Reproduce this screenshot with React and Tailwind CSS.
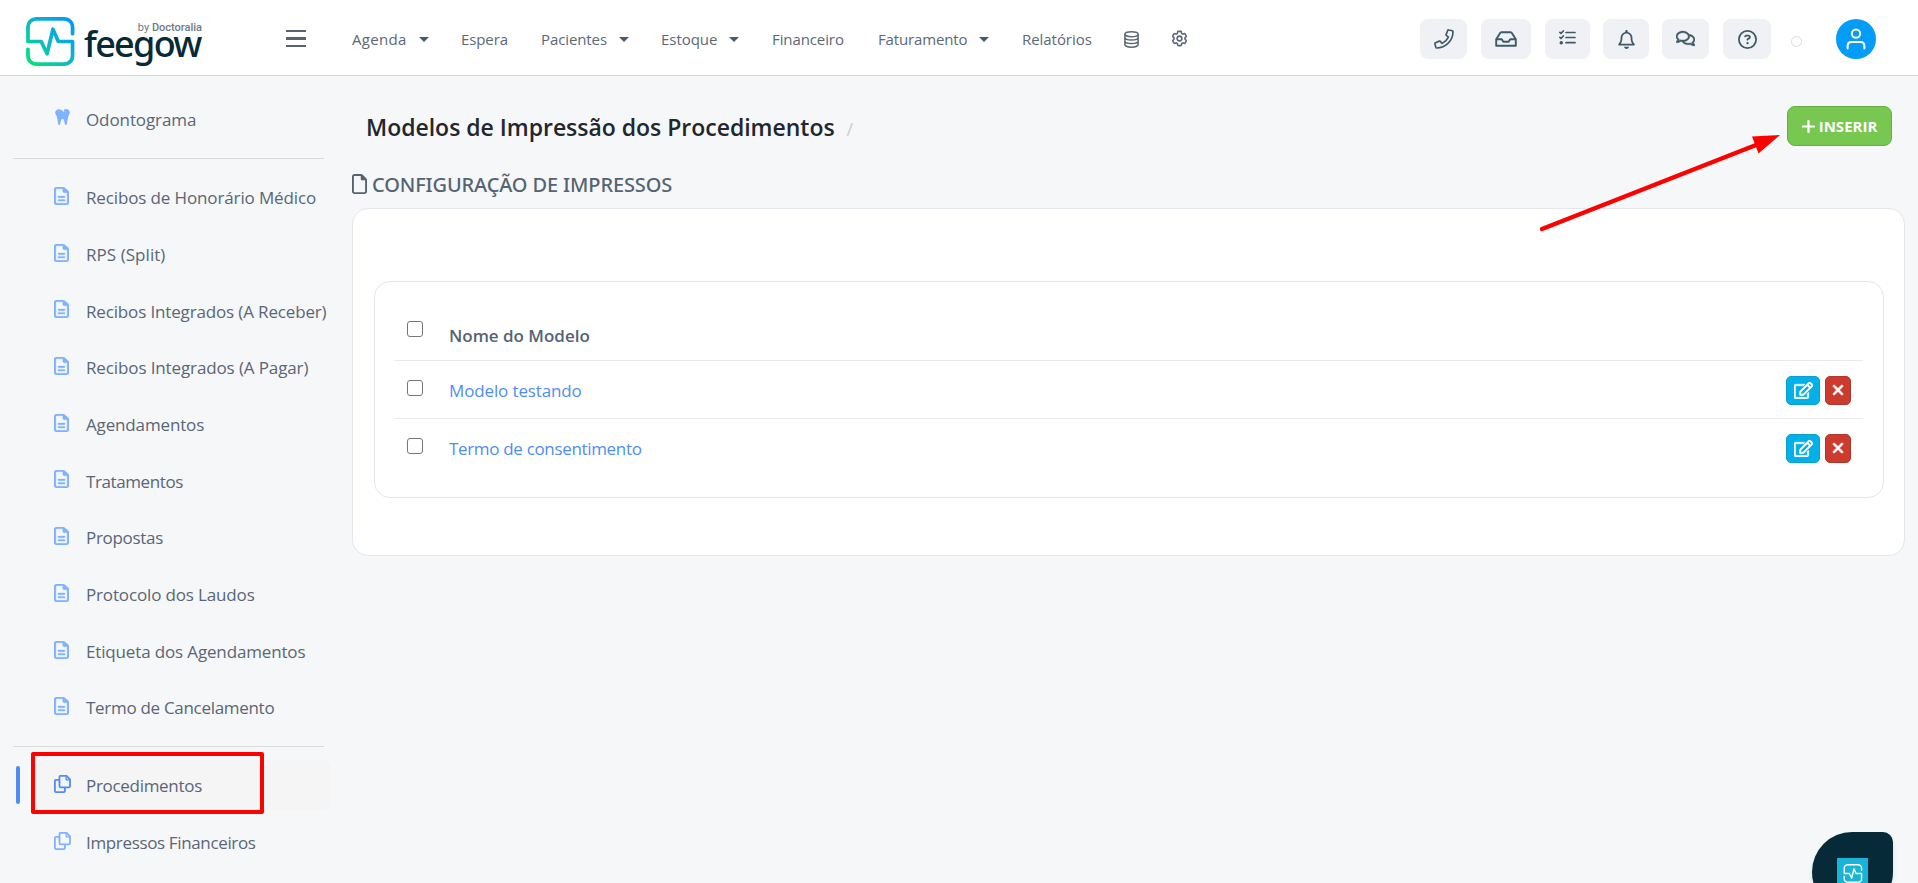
import React from 'react';
import {
    FaRegBell,
    FaRegCircleQuestion,
    FaRegFile,
    FaRegFileLines,
    FaTooth,
    FaXmark,
} from 'react-icons/fa6';
import { FaRegComments, FaRegEdit } from 'react-icons/fa';
import { HiOutlineCog6Tooth } from 'react-icons/hi2';

const menu = [
    { label: "Agenda", width: "w-[109px]", tracking: "tracking-[0.3px]", caret: true },
    { label: "Espera", width: "w-[80px]", tracking: "tracking-[-0.1px]" },
    { label: "Pacientes", width: "w-[120px]", tracking: "tracking-[-0.1px]", caret: true },
    { label: "Estoque", width: "w-[111px]", tracking: "tracking-[-0.05px]", caret: true },
    { label: "Financeiro", width: "w-[106px]", tracking: "tracking-[-0.1px]" },
    { label: "Faturamento", width: "w-[144px]", tracking: "tracking-[-0.15px]", caret: true },
    { label: "Relatórios", width: "w-[102px]", tracking: "tracking-[-0.05px]" },
];

const documents = [
    { label: "Recibos de Honorário Médico", tracking: "tracking-[-0.13px]" },
    { label: "RPS (Split)", tracking: "tracking-[0.05px]" },
    { label: "Recibos Integrados (A Receber)", tracking: "tracking-[-0.15px]" },
    { label: "Recibos Integrados (A Pagar)", tracking: "tracking-[-0.12px]" },
    { label: "Agendamentos", tracking: "tracking-[-0.15px]" },
    { label: "Tratamentos", tracking: "tracking-[-0.4px]" },
    { label: "Propostas", tracking: "tracking-[-0.3px]" },
    { label: "Protocolo dos Laudos", tracking: "tracking-[-0.15px]" },
    { label: "Etiqueta dos Agendamentos", tracking: "tracking-[-0.15px]" },
    { label: "Termo de Cancelamento", tracking: "tracking-[-0.3px]" },
];

const models = [
    { name: "Modelo testando", tracking: "tracking-[-0.13px]" },
    { name: "Termo de consentimento", tracking: "tracking-[-0.33px]" },
];

const PulseMark = ({ className, stroke, strokeWidth }) => (
    <svg viewBox="0 0 50 50" className={className} fill="none" stroke={stroke} strokeWidth={strokeWidth} strokeLinecap="round" strokeLinejoin="round">
        <defs>
            <linearGradient id="pulse" x1="0" y1="50" x2="50" y2="0" gradientUnits="userSpaceOnUse">
                <stop offset="0" stopColor="#00e676" />
                <stop offset="0.1" stopColor="#00e27c" />
                <stop offset="0.45" stopColor="#0fb9c4" />
                <stop offset="1" stopColor="#0095ff" />
            </linearGradient>
        </defs>
        <path d="M47.5 17V11C47.5 5.5 44 2 38.5 2H11C5.5 2 2 5.5 2 11V25H15.5L21.5 37.5L27.5 12.5L33 25H47.5V39C47.5 44.5 44 48 38.5 48H11C5.5 48 2 44.5 2 39V33" />
    </svg>
);

const PhoneIcon = () => (
    <svg viewBox="-20 -20 552 552" className="h-5 w-5" fill="none" stroke="currentColor" strokeWidth="46" strokeLinejoin="round">
        <path d="M485 30l-98-24c-11-3-23 3-28 14l-44 108c-4 10-1 21 7 28l56 48c-36 77-97 138-174 174l-48-56c-7-8-18-11-28-7L20 359c-11 5-17 17-14 28l24 98c3 11 12 19 24 19 248 0 450-202 450-450 0-12-8-21-19-24z" />
    </svg>
);

const InboxIcon = () => (
    <svg viewBox="0 0 22 16" className="h-4 w-[22px]" fill="none" stroke="currentColor" strokeWidth="1.9" strokeLinejoin="round">
        <path d="M1.2 8.3L5 2.2C5.3 1.5 5.8 1.2 6.4 1.2H15.6C16.2 1.2 16.7 1.5 17 2.2L20.8 8.3V14.7H1.2Z" />
        <path d="M1.4 8.3H6.8L8.3 10.8H13.7L15.2 8.3H20.6" />
    </svg>
);

const TasksIcon = () => (
    <svg viewBox="0 0 17 15" className="mb-1 h-[15px] w-[17px]" fill="none" stroke="currentColor" strokeWidth="1.7" strokeLinecap="round" strokeLinejoin="round">
        <path d="M.9 2.4L2 3.5L4.3 1M.9 7.4L2 8.5L4.3 6M7 2.5H16M7 7.5H16M7 12.7H16" />
        <circle cx="2.3" cy="12.7" r=".9" fill="currentColor" />
    </svg>
);

const DatabaseIcon = () => (
    <svg viewBox="0 0 15 17" className="h-[17px] w-[15px]" fill="none" stroke="currentColor" strokeWidth="1.5">
        <ellipse cx="7.5" cy="3.3" rx="6.6" ry="2.5" />
        <path d="M.9 3.3V13.6C.9 15 3.9 16.2 7.5 16.2S14.1 15 14.1 13.6V3.3M.9 6.6C.9 8 3.9 9.1 7.5 9.1S14.1 8 14.1 6.6M.9 10.1C.9 11.5 3.9 12.6 7.5 12.6S14.1 11.5 14.1 10.1" />
    </svg>
);

const CopyIcon = ({ className }) => (
    <svg viewBox="0 0 17 18" className={className} fill="none" stroke="currentColor" strokeWidth="1.8" strokeLinejoin="round">
        <path d="M6.2.9H12.6L16 4.3V11.2C16 11.9 15.6 12.3 14.9 12.3H6.6C5.9 12.3 5.5 11.9 5.5 11.2V1.9C5.5 1.3 5.7.9 6.2.9Z" />
        <path d="M12.2 1V4.8H16" strokeWidth="1.3" />
        <path d="M5.3 4.9H2C1.3 4.9.9 5.3.9 6V16C.9 16.7 1.3 17.1 2 17.1H9.8C10.5 17.1 10.9 16.7 10.9 16V12.6" />
    </svg>
);

const TopButton = ({ className, children }) => (
    <button className={`flex h-10 items-center justify-center rounded-lg bg-[#f0f1f5] text-[#3f5a66] ${className}`}>
        {children}
    </button>
);

const Header = () => (
    <header className="flex h-[76px] shrink-0 border-b border-[#d3d6e0] bg-white text-[#556373]">
        <div className="flex w-[352px] shrink-0 pl-[26px]">
            <PulseMark className="mt-[17px] h-[49px] w-[49px]" stroke="url(#pulse)" strokeWidth={3.8} />
            <div className="ml-[9px] flex w-[127px] flex-col pt-[22px]">
                <span className="mr-[9px] self-end font-[Roboto] text-[11px] leading-[12px] text-[#6b7988]">
                    by <span className="font-medium">Doctoralia</span>
                </span>
                <span className="-mt-1 font-['Noto_Sans'] text-[36px] font-medium leading-[28px] tracking-[-1.7px] text-[#062a38]">
                    feegow
                </span>
            </div>
            <div className="ml-[75px] mt-[30px] flex h-[17px] w-5 flex-col justify-between">
                <i className="h-[2.4px] bg-[#556373]" />
                <i className="h-[2.4px] bg-[#556373]" />
                <i className="h-[2.4px] bg-[#556373]" />
            </div>
        </div>

        <nav className="flex items-center pt-[3px] text-[15px] text-[#5c6878]">
            {menu.map((item) => (
                <a key={item.label} className={`flex items-center whitespace-nowrap ${item.width} ${item.tracking}`}>
                    {item.label}
                    {item.caret && (
                        <svg viewBox="0 0 10 5" className="ml-3 h-[5px] w-[10px] fill-[#4b5a6a]">
                            <path d="M0 0H10L5 5Z" />
                        </svg>
                    )}
                </a>
            ))}
            <div className="w-[46px]"><DatabaseIcon /></div>
            <HiOutlineCog6Tooth className="mb-px h-[19px] w-[19px] stroke-2" />
        </nav>

        <div className="ml-auto flex items-start pr-[42px] pt-[19px]">
            <TopButton className="mr-[14px] w-[47px]"><PhoneIcon /></TopButton>
            <TopButton className="mr-[14px] w-[50px]"><InboxIcon /></TopButton>
            <TopButton className="mr-[13px] w-[45px]"><TasksIcon /></TopButton>
            <TopButton className="mr-[13px] w-[46px]"><FaRegBell className="h-[19px] w-[19px]" /></TopButton>
            <TopButton className="mr-[14px] w-[47px]"><FaRegComments className="mb-0.5 h-[19px] w-[19px] stroke-current stroke-[12]" /></TopButton>
            <TopButton className="mr-[20px] w-12"><FaRegCircleQuestion className="h-[19px] w-[19px]" /></TopButton>
            <span className="mr-[34px] mt-[17px] h-[11px] w-[11px] rounded-full border border-[#dcdcdc]" />
            <div className="flex h-10 w-10 items-center justify-center rounded-full bg-[#039cf7]">
                <svg viewBox="0 0 20 22" className="h-[22px] w-5" fill="none" stroke="#fff" strokeWidth="2" strokeLinecap="round">
                    <circle cx="10" cy="5.6" r="4.2" />
                    <path d="M1.6 20.5V18C1.6 15.5 3.2 14 5.6 14H14.4C16.8 14 18.4 15.5 18.4 18V20.5" />
                </svg>
            </div>
        </div>
    </header>
);

const SideItem = ({ icon, label, tracking }) => (
    <a className="flex h-[56.7px] items-center">
        <span className="mb-[2px] flex w-8 text-[#7fb2ff]">{icon}</span>
        <span className={`mt-[2px] whitespace-nowrap ${tracking}`}>{label}</span>
    </a>
);

const Sidebar = () => (
    <aside className="w-[352px] shrink-0 pl-[13px] pt-[14px] text-[17px] text-[#5a6676]">
        <div className="pl-[41px]">
            <SideItem icon={<FaTooth preserveAspectRatio="none" className="h-[18px] w-[17px]" />} label="Odontograma" tracking="tracking-[-0.1px]" />
        </div>
        <hr className="mb-[10px] mt-[11px] w-[311px] border-[#d8dbe0]" />
        <div className="pl-[41px]">
            {documents.map((doc) => (
                <SideItem
                    key={doc.label}
                    icon={<FaRegFileLines preserveAspectRatio="none" className="h-[18px] w-[15px] stroke-current stroke-[8]" />}
                    label={doc.label}
                    tracking={doc.tracking}
                />
            ))}
        </div>
        <hr className="mb-[10px] mt-[10px] w-[311px] border-[#d8dbe0]" />
        <div className="relative flex h-[56.7px] items-center">
            <span className="ml-[3px] h-[38px] w-1 rounded-sm bg-[#4f8ef0]" />
            <div className="ml-[11px] flex h-[50px] w-[300px] items-center rounded-lg bg-[#f5f5f5] pl-[23px]">
                <CopyIcon className="mb-[2px] mr-[15px] h-[18px] w-[17px] text-[#4f8ef0]" />
                <span className="mt-[2px] tracking-[-0.3px]">Procedimentos</span>
            </div>
            <div className="absolute left-[18px] top-[-5px] h-[62px] w-[233px] rounded-[2px] border-4 border-[#fe0000]" />
        </div>
        <div className="pl-[41px]">
            <SideItem icon={<CopyIcon className="h-[18px] w-[17px]" />} label="Impressos Financeiros" tracking="tracking-[-0.35px]" />
        </div>
    </aside>
);

const Checkbox = () => (
    <input type="checkbox" className="block h-4 w-4 appearance-none rounded-[3px] border border-[#767676] bg-white" />
);

const Main = () => (
    <main className="relative min-w-0 flex-1 pr-[13px]">
        <div className="flex h-[94px] items-start justify-between pl-[14px] pr-[13px]">
            <h1 className="mt-[34px] flex items-baseline whitespace-nowrap text-[23px] font-semibold leading-[34px] tracking-[-0.02px] text-[#22262e]">
                Modelos de Impressão dos Procedimentos
                <span className="ml-3 text-lg font-normal text-[#c9cdd3]">/</span>
            </h1>
            <button className="mt-[30px] flex h-10 w-[105px] items-center justify-center rounded-lg border border-[#67ad45] bg-[#77c751] text-[15px] font-bold text-white">
                <svg viewBox="0 0 13 13" className="mr-1 h-[13px] w-[13px]" stroke="currentColor" strokeWidth="2.2" strokeLinecap="round">
                    <path d="M6.5 1V12M1 6.5H12" />
                </svg>
                INSERIR
            </button>
        </div>

        <h2 className="flex h-[38px] items-start whitespace-nowrap font-['Noto_Sans'] text-[20px] font-medium leading-[30px] tracking-[-0.12px] text-[#556373]">
            <FaRegFile className="mr-[5px] mt-1 h-5 w-[15px]" />
            CONFIGURAÇÃO DE IMPRESSOS
        </h2>

        <section className="h-[348px] rounded-2xl border border-[#e4e6eb] bg-white pl-[21px] pr-5 pt-[72px]">
            <div className="h-[217px] rounded-2xl border border-[#e6e6e8] px-5 pt-[21px]">
                <div className="flex h-[58px] border-b border-[#e9eaec]">
                    <div className="w-[54px] pl-3 pt-[18px]"><Checkbox /></div>
                    <div className="pt-[19px] text-[17px] font-semibold leading-7 tracking-[-0.02px] text-[#556373]">Nome do Modelo</div>
                </div>
                {models.map((model) => (
                    <div key={model.name} className="flex h-[58px] border-b border-[#e9eaec] last:border-b-0">
                        <div className="w-[54px] pl-3 pt-[18.5px]"><Checkbox /></div>
                        <a className={`pt-4 text-[17px] leading-7 text-[#4f8ef0] ${model.tracking}`}>{model.name}</a>
                        <div className="ml-auto mr-3 mt-[15px] flex gap-[5px]">
                            <button className="flex h-[29px] w-[34px] items-center justify-center rounded-[5px] border border-[#0b9fd2] bg-[#03b0e8] text-white">
                                <FaRegEdit className="h-[17px] w-[19px] stroke-current stroke-[14]" />
                            </button>
                            <button className="flex h-[29px] w-[26px] items-center justify-center rounded-[5px] border border-[#b3362a] bg-[#cc3b2e] text-white">
                                <FaXmark className="mb-px h-4 w-4 stroke-current stroke-[22]" />
                            </button>
                        </div>
                    </div>
                ))}
            </div>
        </section>

        {/* pointer to the insert button */}
        <svg viewBox="0 0 240 98" className="pointer-events-none absolute right-[138px] top-[58px] h-[98px] w-[240px]">
            <path d="M2 95L216 11" stroke="#fe0000" strokeWidth="4.4" strokeLinecap="round" />
            <path d="M240 1L212 2.5L218.5 19.5Z" fill="#fe0000" />
        </svg>
    </main>
);

export default function App() {
    return (
        <div className="relative flex h-[883px] flex-col overflow-hidden bg-[#f5f7f9] font-['Open_Sans',sans-serif]">
            <Header />
            <div className="flex min-h-0 flex-1">
                <Sidebar />
                <Main />
            </div>
            <div className="absolute left-[1812px] top-[832px] flex h-20 w-[81px] justify-center rounded-b-[40px] rounded-tl-[40px] rounded-tr-[10px] bg-[#062a38] pt-[26px] shadow-md">
                <div className="flex h-[31px] w-[31px] items-start justify-center bg-[#18b5d8] pt-[6px]">
                    <PulseMark className="h-[19px] w-5" stroke="#fff" strokeWidth={3.6} />
                </div>
            </div>
        </div>
    );
}
